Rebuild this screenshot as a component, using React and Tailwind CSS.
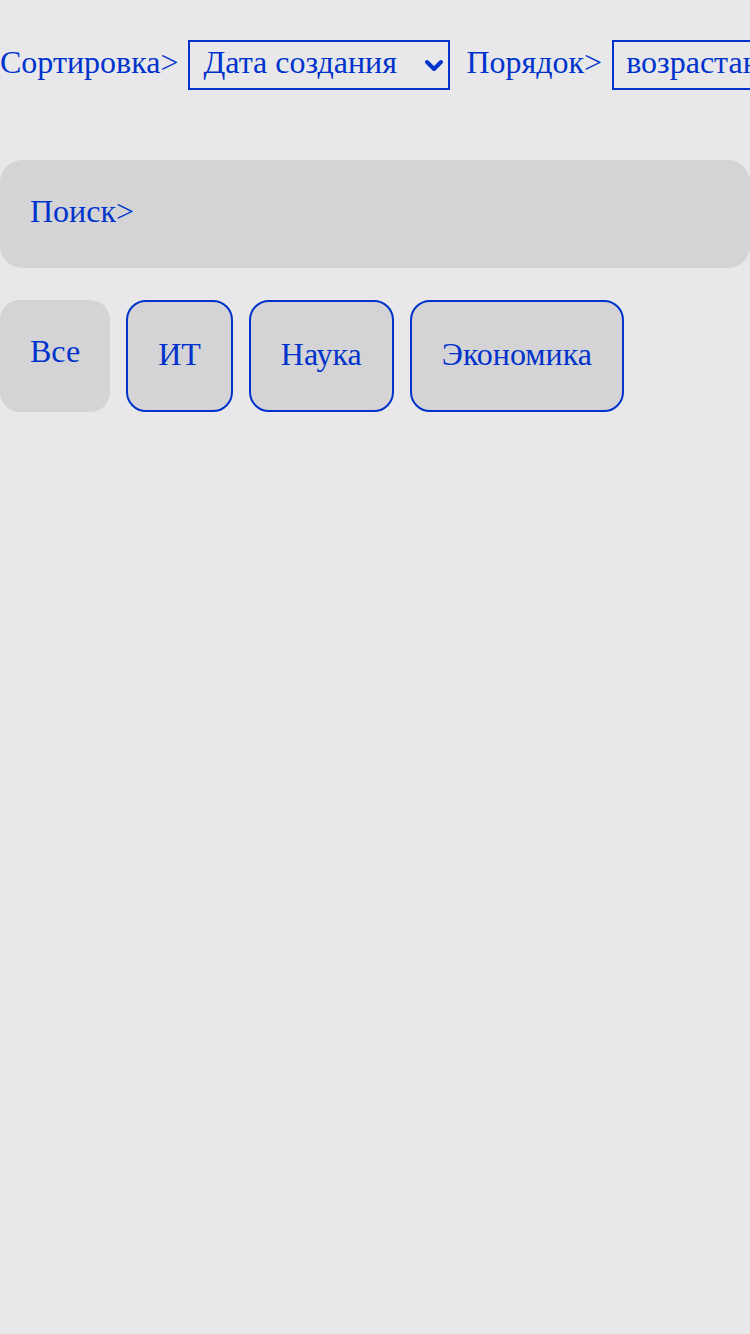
const categories = ['ИТ', 'Наука', 'Экономика']

function Chevron() {
  return (
    <svg width="20" height="14" viewBox="0 0 20 14" className="pointer-events-none absolute right-[4px] top-[17px]">
      <path d="M3 3 L10 10 L17 3" fill="none" stroke="#0033cc" strokeWidth="4" strokeLinecap="round" strokeLinejoin="round" />
    </svg>
  )
}

export default function App() {
  return (
    <div className="min-h-[1334px] w-[750px] overflow-hidden bg-[#e8e8ea] text-[#0033cc] font-['Liberation_Serif','Times_New_Roman',serif] text-[32px] leading-none">
      <div className="flex items-center pt-[40px] whitespace-nowrap">
        <span className="-mt-[6px]">Сортировка&gt;</span>
        <div className="relative ml-[10px] h-[50px] w-[262px] shrink-0 border-2 border-[#0033cc]">
          <span className="absolute left-[13px] top-[4px]">Дата создания</span>
          <Chevron />
        </div>
        <span className="ml-[16px] -mt-[6px]">Порядок&gt;</span>
        <div className="relative ml-[10px] h-[50px] w-[262px] shrink-0 border-2 border-[#0033cc]">
          <span className="absolute left-[12px] top-[4px]">возрастанию</span>
        </div>
      </div>

      <div className="mt-[70px] flex h-[108px] items-center rounded-[22px] bg-[#d4d4d6] px-[30px]">
        <span className="-mt-[6px]">Поиск&gt;</span>
      </div>

      <div className="mt-[32px] flex gap-[16px]">
        <div className="flex h-[112px] items-center rounded-[20px] bg-[#d4d4d6] px-[30px]">
          <span className="-mt-[10px]">Все</span>
        </div>
        {categories.map((c) => (
          <div
            key={c}
            className="flex h-[112px] items-center rounded-[20px] border-2 border-[#0033cc] bg-[#d4d4d6] px-[30px]"
          >
            <span className="-mt-[4px]">{c}</span>
          </div>
        ))}
      </div>
    </div>
  )
}
